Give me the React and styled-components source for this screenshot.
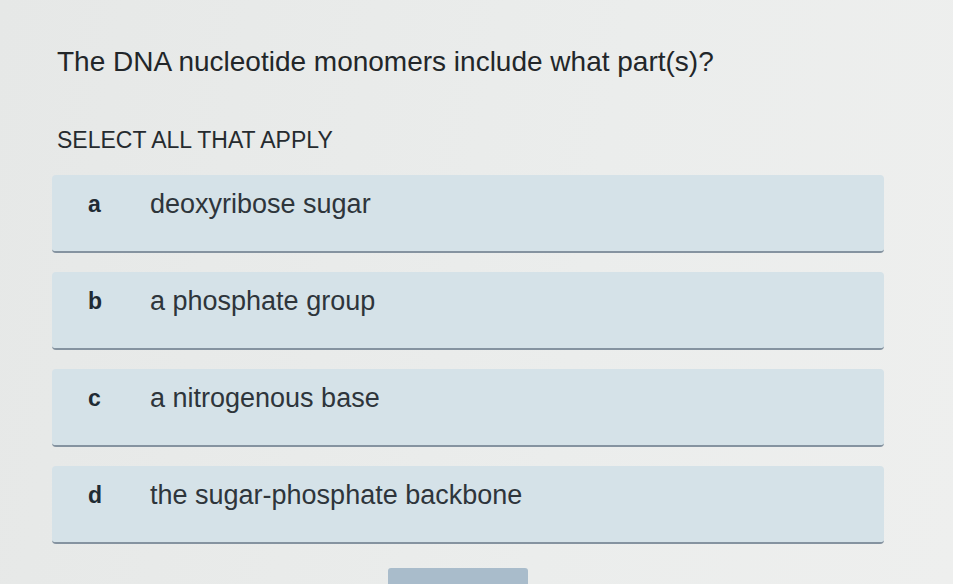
import React from "react";
import styled, { createGlobalStyle } from "styled-components";

const GlobalStyle = createGlobalStyle`
  html, body {
    margin: 0;
    padding: 0;
    background: #e9ebea;
  }
  body {
    font-family: "Liberation Sans", Arial, sans-serif;
    color: #2b3136;
    overflow: hidden;
  }
`;

const options = [
  { key: "a", text: "deoxyribose sugar" },
  { key: "b", text: "a phosphate group" },
  { key: "c", text: "a nitrogenous base" },
  { key: "d", text: "the sugar-phosphate backbone" },
];

function App() {
  return (
    <>
      <GlobalStyle />
      <Page>
        <Question>The DNA nucleotide monomers include what part(s)?</Question>
        <Hint>SELECT ALL THAT APPLY</Hint>
        <OptionList>
          {options.map((opt) => (
            <Option key={opt.key}>
              <Letter>{opt.key}</Letter>
              <OptionText>{opt.text}</OptionText>
            </Option>
          ))}
        </OptionList>
        <CheckButton aria-label="Check" />
      </Page>
    </>
  );
}

export default App;

const Page = styled.div`
  width: 953px;
  height: 584px;
  box-sizing: border-box;
  padding: 46px 0 0 52px;
  background: linear-gradient(100deg, #e6e8e7 0%, #ebedec 60%, #eeefee 100%);
  overflow: hidden;
`;

const Question = styled.h1`
  margin: 0 0 0 5px;
  font-size: 28px;
  line-height: 32px;
  font-weight: 400;
  color: #222629;
`;

const Hint = styled.div`
  margin: 49px 0 0 5px;
  font-size: 23px;
  line-height: 26px;
  color: #262b2f;
`;

const OptionList = styled.div`
  margin-top: 22px;
  width: 832px;
  display: flex;
  flex-direction: column;
  gap: 19px;
`;

const Option = styled.div`
  height: 78px;
  box-sizing: border-box;
  display: flex;
  align-items: flex-start;
  padding: 14px 0 0 36px;
  background: #d5e2e8;
  border-radius: 4px;
  border-bottom: 2px solid #8593a0;
`;

const Letter = styled.span`
  width: 62px;
  font-size: 23px;
  line-height: 30px;
  font-weight: 700;
  color: #1f2b34;
`;

const OptionText = styled.span`
  font-size: 27px;
  line-height: 30px;
  color: #2e353b;
`;

const CheckButton = styled.button`
  display: block;
  margin: 24px 0 0 336px;
  width: 140px;
  height: 44px;
  border: none;
  background: #a9bccb;
  border-radius: 3px 3px 0 0;
`;
